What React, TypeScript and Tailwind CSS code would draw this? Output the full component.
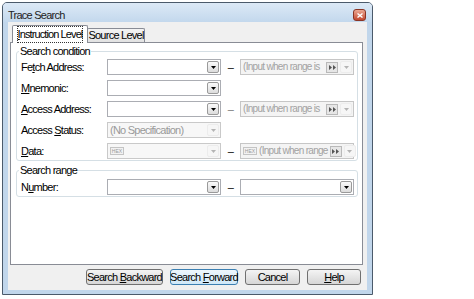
import React from "react";

function Arrow({ disabled }: { disabled?: boolean }) {
  return (
    <div
      className={`w-[12px] h-[12px] shrink-0 flex items-center justify-center rounded-[2px] border ${
        disabled ? "border-[#ececec] bg-[#f6f6f6]" : "border-[#9a9a9a] bg-gradient-to-b from-[#fafafa] to-[#dcdcdc]"
      }`}
    >
      <svg width="5" height="3" viewBox="0 0 5 3">
        <path d="M0 0h5L2.5 3z" fill={disabled ? "#b4b4b4" : "#000"} />
      </svg>
    </div>
  );
}

function Hex() {
  return (
    <div className="w-[14px] h-[8px] shrink-0 border border-[#c4c4c4] bg-[#f2f2f2] flex items-center justify-center text-[5px] tracking-normal text-[#9a9a9a]">
      HEX
    </div>
  );
}

function Combo({ text, disabled, hex }: { text?: string; disabled?: boolean; hex?: boolean }) {
  return (
    <div
      className={`w-[114px] h-[16px] shrink-0 border flex items-center pl-[2px] pr-[1px] ${
        disabled ? "border-[#c9c9c9] bg-[#f7f7f7]" : "border-[#abadb3] bg-white"
      }`}
    >
      {hex && <Hex />}
      <span className="flex-1 whitespace-nowrap text-[#9a9a9a]">{text}</span>
      <Arrow disabled={disabled} />
    </div>
  );
}

function RangeBox({ hex }: { hex?: boolean }) {
  return (
    <div className="w-[114px] h-[16px] shrink-0 border border-[#c6c6c6] bg-[#f4f4f4] flex items-center pl-[2px] pr-[1px] gap-[2px]">
      {hex && <Hex />}
      <span className="flex-1 whitespace-nowrap text-[10px] tracking-[-0.7px] text-[#a2a2a2]">
        {hex ? "(Input when range" : "(Input when range is"}
      </span>
      <div className="w-[12px] h-[11px] shrink-0 border border-[#b9b9b9] bg-[#e6e6e6] flex items-center justify-center">
        <svg width="7" height="5" viewBox="0 0 7 5">
          <path d="M0 0l3 2.5L0 5zM4 0l3 2.5L4 5z" fill="#555" />
        </svg>
      </div>
      <Arrow disabled />
    </div>
  );
}

function Row({ label, children }: { label: React.ReactNode; children: React.ReactNode }) {
  return (
    <div className="flex items-center h-[16px]">
      <div className="w-[86px] shrink-0 whitespace-nowrap">{label}</div>
      {children}
    </div>
  );
}

function Dash({ dim }: { dim?: boolean }) {
  return <div className={`w-[19px] shrink-0 text-center ${dim ? "text-[#777]" : "text-black"}`}>–</div>;
}

function Btn({ children, className }: { children: React.ReactNode; className: string }) {
  return (
    <button className={`h-[16px] rounded-[3px] border flex items-center justify-center whitespace-nowrap ${className}`}>
      {children}
    </button>
  );
}

export default function App() {
  return (
    <div className="w-[474px] h-[299px] bg-white pl-[2px] pt-[2px] font-['Liberation_Sans',Arial,sans-serif] text-[11px] tracking-[-0.75px] leading-none text-black">
      <div className="w-[371px] h-[293px] border border-[#4b5a6b] rounded-t-[5px] bg-[#c1d6eb] flex flex-col">
        <div className="h-[19px] flex items-center justify-between pl-[5px] pr-[6px] pt-[5px] rounded-t-[4px] bg-gradient-to-b from-[#dce9f6] to-[#c3d8ed]">
          <span className="text-[#222]">Trace Search</span>
          <div className="w-[13px] h-[12px] rounded-[3px] border border-[#8a3424] bg-gradient-to-b from-[#eba894] to-[#c2472f] flex items-center justify-center">
            <svg width="6" height="5" viewBox="0 0 6 5">
              <path d="M0.5 0.5l5 4M5.5 0.5l-5 4" stroke="#fff" strokeWidth="1.4" />
            </svg>
          </div>
        </div>

        <div className="mx-[5px] h-[268px] bg-[#f0f0f0] flex flex-col pt-[3px] pl-[2px] pr-[4px]">
          <div className="flex items-end h-[17px] pl-[2px]">
            <div className="relative z-10 -mb-px h-[18px] w-[76px] bg-white border border-b-0 border-[#898c95] rounded-t-[2px] flex items-center justify-center whitespace-nowrap">
              <span className="border border-dotted border-[#333] py-[2px] tracking-[-0.9px]">
                <span className="underline">I</span>nstruction Level
              </span>
            </div>
            <div className="-ml-px h-[14px] w-[58px] border border-b-0 border-[#898c95] rounded-t-[2px] bg-gradient-to-b from-[#f4f4f4] to-[#e2e2e2] flex items-center justify-center whitespace-nowrap">
              Source Level
            </div>
          </div>

          <div className="h-[223px] border border-[#898c95] bg-white pt-[2px] pl-[5px] pr-[4px]">
            <fieldset className="border border-[#d5dfe5] rounded-[3px] pl-[4px] pr-[3px] pb-[1px]">
              <legend className="-ml-[2px] px-[1px] leading-[13px]">Search condition</legend>
              <div className="flex flex-col gap-[5px] pt-[1px]">
                <Row label={<>Fe<span className="underline">t</span>ch Address:</>}>
                  <Combo />
                  <Dash />
                  <RangeBox />
                </Row>
                <Row label={<><span className="underline">M</span>nemonic:</>}>
                  <Combo />
                </Row>
                <Row label={<><span className="underline">A</span>ccess Address:</>}>
                  <Combo />
                  <Dash dim />
                  <RangeBox />
                </Row>
                <Row label={<>Access <span className="underline">S</span>tatus:</>}>
                  <Combo text="(No Specification)" disabled />
                </Row>
                <Row label={<><span className="underline">D</span>ata:</>}>
                  <Combo disabled hex />
                  <Dash />
                  <RangeBox hex />
                </Row>
              </div>
            </fieldset>

            <fieldset className="mt-[3px] border border-[#d5dfe5] rounded-[3px] pl-[4px] pr-[3px] pb-[1px]">
              <legend className="-ml-[2px] px-[1px] leading-[13px]">Search range</legend>
              <div className="pt-[2px]">
                <Row label={<>N<span className="underline">u</span>mber:</>}>
                  <Combo />
                  <Dash />
                  <Combo />
                </Row>
              </div>
            </fieldset>
          </div>

          <div className="mt-[4px] h-[16px] flex justify-end gap-[7px] pr-[2px]">
            <Btn className="w-[77px] border-[#707070] bg-gradient-to-b from-[#f4f4f4] to-[#d6d6d6]">
              Search&nbsp;<span className="underline">B</span>ackward
            </Btn>
            <Btn className="w-[68px] border-[#3c7fb1] bg-gradient-to-b from-[#eef7fd] to-[#cfe8f8]">
              Search&nbsp;<span className="underline">F</span>orward
            </Btn>
            <Btn className="w-[55px] border-[#707070] bg-gradient-to-b from-[#f4f4f4] to-[#d6d6d6]">Cancel</Btn>
            <Btn className="w-[54px] border-[#707070] bg-gradient-to-b from-[#f4f4f4] to-[#d6d6d6]">
              <span className="underline">H</span>elp
            </Btn>
          </div>
        </div>
      </div>
    </div>
  );
}
